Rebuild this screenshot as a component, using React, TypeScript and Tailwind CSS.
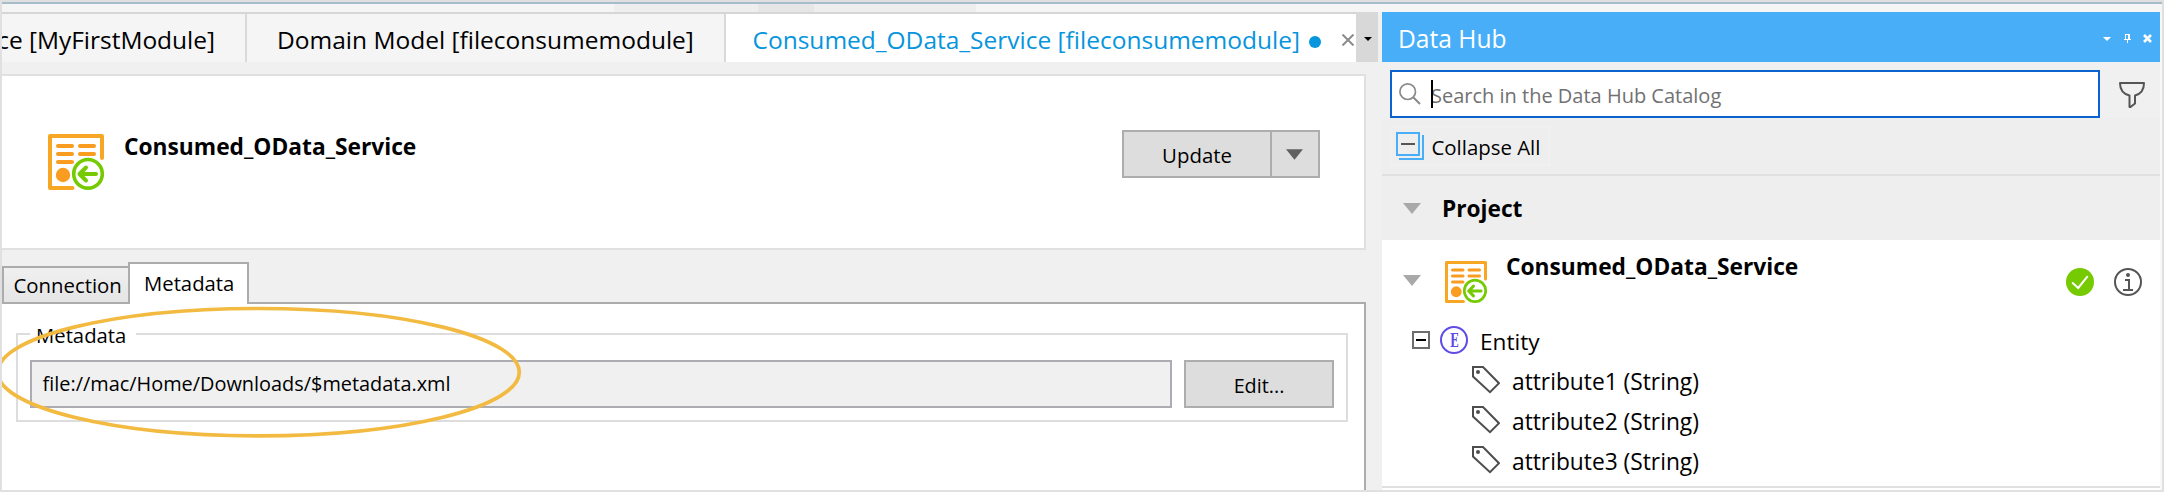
import type { ReactNode } from 'react';

function ServiceIcon({ className }: { className: string }) {
  return (
    <svg viewBox="0 0 56 56" fill="none" strokeLinecap="round" className={className}>
      <path d="M24.5 54H2V2H54V24" stroke="#f8a724" strokeWidth="4" strokeLinejoin="round" />
      <path d="M10 12H24M32 12H46M10 20H24M32 20H46M10 28H24" stroke="#fa9c1f" strokeWidth="4" />
      <circle cx="15" cy="41" r="7.2" fill="#fa9c1f" />
      <circle cx="40" cy="39.8" r="14.3" stroke="#76ca02" strokeWidth="3.6" />
      <path d="M48 40H31.5M38 33.5L31.5 40L38 46.5" stroke="#76ca02" strokeWidth="4" strokeLinejoin="round" />
    </svg>
  );
}

function Triangle({ className }: { className: string }) {
  return (
    <svg viewBox="0 0 18 11" className={className} fill="currentColor">
      <path d="M0 0H18L9 11Z" />
    </svg>
  );
}

function TagIcon() {
  return (
    <svg viewBox="0 0 28 28" className="h-7 w-7 shrink-0" fill="none" stroke="#4d4d4d" strokeWidth="2">
      <path d="M1 1H11L27 17.2L18 26.2L1 10.5Z" />
      <circle cx="6" cy="6" r="2" fill="#4d4d4d" stroke="none" />
    </svg>
  );
}

function TopStrip() {
  return (
    <div className="flex h-[10px] shrink-0 border-t-2 border-[#a6bccb] bg-[#f5f5f5]">
      <div className="w-[612px]" />
      <div className="w-[144px] bg-[#eeeeee]" />
      <div className="w-[56px] bg-[#e6e6e6]" />
      <div className="w-[162px] bg-[#eeeeee]" />
    </div>
  );
}

function DocumentTabs() {
  return (
    <div className="flex h-[50px] shrink-0">
      <div className="flex w-[1354px] overflow-hidden border-t-2 border-[#d6d6d6] bg-[#f5f5f5] text-[24.5px] leading-[51px] whitespace-nowrap">
        <div className="flex w-[245px] justify-end overflow-hidden border-r-2 border-[#d9d9d9] pr-[30px] tracking-[-0.02px]">
          <span>ce [MyFirstModule]</span>
        </div>
        <div className="w-[479px] border-r-2 border-[#d9d9d9] pl-[30px]">Domain Model [fileconsumemodule]</div>
        <div className="flex flex-1 bg-white pl-[26.5px] text-[#0795dd]">
          <span className="w-[556.5px]">Consumed_OData_Service [fileconsumemodule]</span>
          <span className="mt-[22px] h-3 w-3 rounded-full bg-[#0795dd]" />
          <svg viewBox="0 0 12 12" className="mt-[20px] ml-[21px] h-3 w-3" stroke="#8c8c8c" strokeWidth="2">
            <path d="M.5.5L11.5 11.5M11.5.5L.5 11.5" />
          </svg>
        </div>
      </div>
      <div className="flex w-[22px] justify-center bg-[#d8d8d8] pt-[25px] pl-[2px]">
        <svg viewBox="0 0 8 4" className="h-1 w-2">
          <path d="M0 0H8L4 4Z" />
        </svg>
      </div>
    </div>
  );
}

function ServiceHeader() {
  return (
    <div className="mt-3 flex h-[176px] w-[1364px] shrink-0 justify-between border-y-2 border-r-2 border-[#e0e0e0] bg-white">
      <div className="flex pt-[58px] pl-[46px]">
        <ServiceIcon className="h-14 w-14" />
        <h1 className="-mt-[3px] ml-[20px] text-[22.75px] leading-[32px] font-bold">Consumed_OData_Service</h1>
      </div>
      <div className="mt-[54px] mr-[44px] flex h-12 w-[198px] border-2 border-[#adadad] bg-[#dddddd]">
        <button className="w-[148px] border-r-2 border-[#adadad] pt-px text-[20.4px] leading-[44px]">Update</button>
        <button className="flex flex-1 justify-center pt-[17px] pr-px">
          <Triangle className="h-[11px] w-[17px] text-[#606060]" />
        </button>
      </div>
    </div>
  );
}

function ServiceTabs() {
  return (
    <div className="mt-3 flex h-[42px] shrink-0 items-end">
      <div className="h-[38px] w-[126px] border-2 border-r-0 border-[#acacac] bg-linear-to-b from-[#f0f0f0] to-[#e5e5e5] pl-[9.5px] text-[20.35px] leading-[34px]">Connection</div>
      <div className="h-[42px] w-[121px] border-2 border-b-0 border-[#acacac] bg-white pl-[14px] text-[20.3px] leading-[38px]">Metadata</div>
      <div className="h-[2px] w-[1117px] bg-[#acacac]" />
    </div>
  );
}

function MetadataPanel() {
  return (
    <div className="w-[1364px] flex-1 border-r-2 border-[#acacac] bg-white pt-[14px] pl-[14px]">
      <fieldset className="relative h-[104px] w-[1332px]">
        <div className="flex h-8 items-center">
          <div className="h-[2px] w-[14px] bg-[#dddddd]" />
          <legend className="w-[106px] pt-[2px] pl-[6px] text-[20.3px] leading-[32px]">Metadata</legend>
          <div className="h-[2px] flex-1 bg-[#dddddd]" />
        </div>
        <div className="-mt-[15px] h-[87px] border-2 border-t-0 border-[#dddddd] px-3 pt-[25px]">
          <div className="flex gap-3">
            <div className="h-12 w-[1142px] border-2 border-[#abadb3] bg-[#f0f0f0] pl-[10.5px] text-[19.9px] leading-[43px]">file://mac/Home/Downloads/$metadata.xml</div>
            <button className="h-12 w-[150px] border-2 border-[#adadad] bg-[#dddddd] pt-[3px] text-[19.8px] leading-[41px]">Edit...</button>
          </div>
        </div>
      </fieldset>
    </div>
  );
}

function HubHeader() {
  return (
    <div className="flex h-[50px] shrink-0 bg-[#48aef8] text-white">
      <h2 className="flex-1 pl-[16px] text-[24.6px] leading-[53px]">Data Hub</h2>
      <div className="flex gap-3 pt-[22px] pr-2">
        <svg viewBox="0 0 8 4" className="mt-[3px] mr-px h-1 w-2" fill="white">
          <path d="M0 0H8L4 4Z" />
        </svg>
        <svg viewBox="0 0 7 9" className="h-[9px] w-[7px]" fill="white">
          <path d="M1 0H6V5H7V6H4V9H3V6H0V5H1ZM2 1V5H4V1Z" fillRule="evenodd" />
        </svg>
        <svg viewBox="0 0 9 9" className="h-[9px] w-[9px]" stroke="white" strokeWidth="2.6">
          <path d="M1 1L8 8M8 1L1 8" />
        </svg>
      </div>
    </div>
  );
}

function SearchRow() {
  return (
    <div className="flex h-[56px] shrink-0 bg-[#f0f0f0] pt-2 pl-2">
      <div className="relative flex h-12 w-[710px] border-2 border-[#0a63cf] bg-white">
        <svg viewBox="0 0 22 22" className="mt-[11px] ml-[7px] h-[22px] w-[22px]" fill="none" stroke="#8a8a8a" strokeWidth="1.7">
          <circle cx="8.7" cy="8.7" r="7.8" />
          <path d="M14.2 14.2L21 21" strokeWidth="2" />
        </svg>
        <span className="pt-[3px] pl-[10px] text-[20px] leading-[42px] text-[#717171]">Search in the Data Hub Catalog</span>
        <span className="absolute top-2 left-[39px] h-7 w-[2px] bg-black" />
      </div>
      <svg viewBox="0 0 26 26" className="mt-3 ml-[19px] h-[26px] w-[26px]" fill="none" stroke="#555555" strokeWidth="2" strokeLinejoin="round">
        <path d="M1 1H25C25 8 21.5 12 16 13.5V21.5L11.5 25H10.5V13.5C4.5 12 1 8 1 1Z" />
      </svg>
    </div>
  );
}

function CollapseRow() {
  return (
    <div className="h-[58px] shrink-0 border-b-2 border-[#e0e0e0] bg-[#eeeeee] pt-2 pl-2">
      <button className="flex h-10 w-[160px] border-2 border-[#f0f0f0] pt-1 pl-1 text-[20.4px] leading-[30px]">
        <svg viewBox="0 0 28 28" className="h-7 w-7" fill="none" stroke="#48aef8" strokeWidth="2">
          <path d="M1 1H23V23H1ZM27 3V27H3" />
          <path d="M5 12H19" stroke="#555555" />
        </svg>
        <span className="ml-[7.5px]">Collapse All</span>
      </button>
    </div>
  );
}

function Row({ children, className }: { children: ReactNode; className: string }) {
  return <div className={`flex h-10 ${className}`}>{children}</div>;
}

function ProjectTree() {
  return (
    <div className="flex-1 border-b-2 border-[#e0e0e0] bg-white">
      <div className="flex h-[86px] pt-[21px]">
        <Triangle className="mt-[14px] ml-[21px] h-[11px] w-[18px] text-[#a9a9a9]" />
        <ServiceIcon className="ml-[24px] h-[42px] w-[42px]" />
        <h3 className="-mt-[10px] ml-[19px] w-[560px] text-[22.75px] leading-[32px] font-bold">Consumed_OData_Service</h3>
        <svg viewBox="0 0 28 28" className="mt-[7px] h-7 w-7" fill="none">
          <circle cx="14" cy="14" r="14" fill="#76ca02" />
          <path d="M6.7 15L12.2 20L21.3 8.7" stroke="white" strokeWidth="2" strokeLinecap="round" />
        </svg>
        <svg viewBox="0 0 28 28" className="mt-[7px] ml-5 h-7 w-7" fill="none" stroke="#555555" strokeWidth="2">
          <circle cx="14" cy="14" r="13" />
          <path d="M11 12H15V22M9 22H19" />
          <circle cx="14" cy="7" r="2" fill="#555555" stroke="none" />
        </svg>
      </div>
      <Row className="pl-[30px]">
        <div className="mt-[5px] flex h-[18px] w-[18px] items-center justify-center border-2 border-[#6d6d6d]">
          <div className="h-[2px] w-[10px] bg-black" />
        </div>
        <div className="ml-[10px] flex h-7 w-7 items-center justify-center rounded-full border-2 border-[#5f4be8] font-['DejaVu_Serif'] text-[19px] leading-none font-bold text-[#5f4be8]">
          <span className="scale-x-[0.6]">E</span>
        </div>
        <span className="ml-[12px] text-[22.6px] leading-[31px]">Entity</span>
      </Row>
      {['attribute1 (String)', 'attribute2 (String)', 'attribute3 (String)'].map((name) => (
        <Row key={name} className="pl-[90px]">
          <TagIcon />
          <span className="ml-[12px] text-[22.75px] leading-[31px]">{name}</span>
        </Row>
      ))}
    </div>
  );
}

export default function App() {
  return (
    <div className="relative flex h-[492px] w-[2164px] flex-col overflow-hidden border-2 border-[#e0e0e0] bg-[#f0f0f0] font-['Open_Sans',sans-serif] text-black">
      <TopStrip />
      <div className="flex min-h-0 flex-1">
        <main className="flex w-[1376px] flex-col">
          <DocumentTabs />
          <ServiceHeader />
          <ServiceTabs />
          <MetadataPanel />
        </main>
        <aside className="ml-1 flex w-[778px] flex-col">
          <HubHeader />
          <SearchRow />
          <CollapseRow />
          <div className="flex h-16 shrink-0 bg-[#eeeeee]">
            <Triangle className="mt-[27px] ml-[21px] h-[11px] w-[18px] text-[#a9a9a9]" />
            <h3 className="ml-[21px] text-[22.7px] leading-[66px] font-bold">Project</h3>
          </div>
          <ProjectTree />
          <div className="h-[2px] shrink-0 bg-white" />
        </aside>
        <div className="w-[2px] bg-[#f7f7f7]" />
      </div>
      <svg viewBox="0 0 530 140" className="absolute top-[300px] -left-[2px] h-[140px] w-[530px]" fill="none">
        <ellipse cx="258.5" cy="70.2" rx="260.8" ry="63.7" stroke="#f3ba41" strokeWidth="3.7" />
      </svg>
    </div>
  );
}
